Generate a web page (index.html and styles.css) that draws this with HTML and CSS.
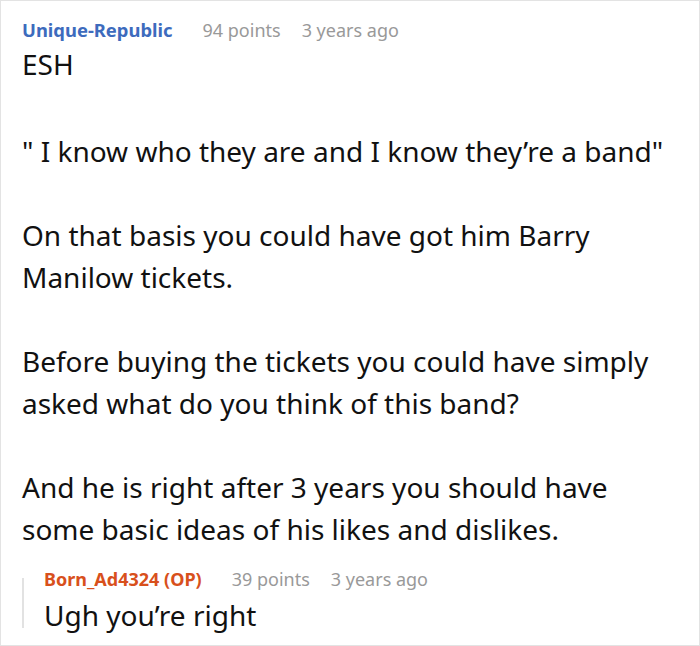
FILE: index.html
```html
<!DOCTYPE html>
<html>
<head>
<meta charset="utf-8">
<link rel="stylesheet" href="styles.css">
</head>
<body>
<div class="card">
  <div class="comment">
    <div class="meta">
      <span class="author">Unique-Republic</span>
      <span class="info">94 points</span>
      <span class="info">3 years ago</span>
    </div>
    <div class="body">
      <p class="first">ESH</p>
      <p>" I know who they are and I know they’re a band"</p>
      <p>On that basis you could have got him Barry Manilow tickets.</p>
      <p>Before buying the tickets you could have simply asked what do you think of this band?</p>
      <p>And he is right after 3 years you should have some basic ideas of his likes and dislikes.</p>
    </div>
  </div>
  <div class="reply">
    <div class="meta">
      <span class="author op">Born_Ad4324 (OP)</span>
      <span class="info">39 points</span>
      <span class="info">3 years ago</span>
    </div>
    <div class="body">
      <p>Ugh you’re right</p>
    </div>
  </div>
</div>
</body>
</html>
```

FILE: styles.css
```css
html, body {
  margin: 0;
  padding: 0;
  background: #fff;
}
.card {
  box-sizing: border-box;
  width: 700px;
  height: 646px;
  border: 1px solid #e3e3e3;
  padding: 16px 21px 0 21px;
  font-family: "Noto Sans", "Open Sans", sans-serif;
  color: #111;
  overflow: hidden;
}
.meta {
  display: flex;
  gap: 21px;
  font-size: 18px;
  line-height: 26px;
}
.author {
  font-weight: 700;
  color: #3d6bbd;
  font-size: 18.4px;
  margin-right: 9px;
}
.author.op {
  color: #d8501c;
  font-size: 18px;
}
.info {
  color: #999;
}
.body {
  font-size: 28px;
  line-height: 42px;
}
.body p {
  margin: 0 0 42px 0;
}
.body p.first {
  margin-bottom: 45px;
}
.comment .body p:last-child {
  margin-bottom: 0;
}
.reply {
  margin-top: 16px;
  padding-left: 22px;
  background: linear-gradient(#e2e2e2, #e2e2e2) no-repeat left 0 top 12px / 2px 50px;
}
.reply .body {
  line-height: 40px;
  margin-top: 3px;
}
.reply .body p {
  margin: 0;
}
```
